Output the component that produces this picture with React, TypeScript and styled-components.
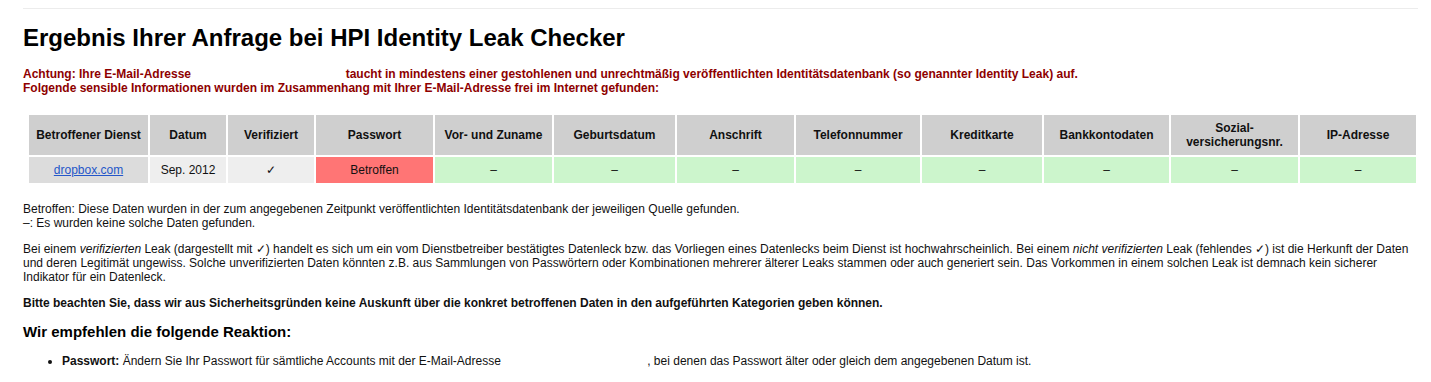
import React from "react";
import styled, { createGlobalStyle } from "styled-components";

const Global = createGlobalStyle`
  html, body { margin: 0; padding: 0; background: #fff; }
  body {
    font-family: "Liberation Sans", Arial, Helvetica, sans-serif;
    font-size: 12px;
    line-height: 14px;
    color: #111;
  }
`;

const Page = styled.div`
  width: 1395px;
  padding: 8px 0 0 23px;
`;

const Rule = styled.hr`
  margin: 0;
  border: 0;
  border-top: 1px solid #ececec;
`;

const Title = styled.h1`
  margin: 15px 0 0;
  font-size: 24px;
  line-height: 28px;
  font-weight: bold;
  color: #000;
`;

const Warning = styled.p`
  margin: 15px 0 0;
  font-weight: bold;
  color: #8e0000;
`;

const Redacted = styled.span<{ $w: number }>`
  display: inline-block;
  width: ${(p) => p.$w}px;
`;

const Table = styled.table`
  margin: 18px 0 0 4px;
  width: 1391px;
  table-layout: fixed;
  border-collapse: separate;
  border-spacing: 2px;
`;

const Col = styled.col<{ $w: number }>`
  width: ${(p) => p.$w}px;
`;

const Th = styled.th`
  background: #cfcfcf;
  padding: 6px;
  font-weight: bold;
  text-align: center;
  vertical-align: middle;
  color: #111;
`;

type Tone = "service" | "meta" | "bad" | "good";
const tones: Record<Tone, string> = {
  service: "#dcdcdc",
  meta: "#eeeeee",
  bad: "#ff7575",
  good: "#ccf5cc",
};

const Td = styled.td<{ $tone: Tone }>`
  background: ${(p) => tones[p.$tone]};
  padding: 6px;
  text-align: center;
  vertical-align: middle;
  color: #111;
`;

const ServiceLink = styled.a`
  color: #2457c9;
  text-decoration: underline;
`;

const Text = styled.p<{ $top: number }>`
  margin: ${(p) => p.$top}px 0 0;
`;

const Strong = styled.p`
  margin: 12px 0 0;
  font-weight: bold;
`;

const Sub = styled.h3`
  margin: 13px 0 0;
  font-size: 15px;
  line-height: 18px;
  font-weight: bold;
  color: #000;
`;

const List = styled.ul`
  margin: 13px 0 0;
  padding-left: 39px;
`;

const columns: { label: string; w: number }[] = [
  { label: "Betroffener Dienst", w: 119 },
  { label: "Datum", w: 76 },
  { label: "Verifiziert", w: 86 },
  { label: "Passwort", w: 117 },
  { label: "Vor- und Zuname", w: 117 },
  { label: "Geburtsdatum", w: 121 },
  { label: "Anschrift", w: 117 },
  { label: "Telefonnummer", w: 124 },
  { label: "Kreditkarte", w: 120 },
  { label: "Bankkontodaten", w: 125 },
  { label: "Sozial-versicherungsnr.", w: 127 },
  { label: "IP-Adresse", w: 116 },
];

export default function App() {
  return (
    <>
      <Global />
      <Page>
        <Rule />
        <Title>Ergebnis Ihrer Anfrage bei HPI Identity Leak Checker</Title>
        <Warning>
          Achtung: Ihre E-Mail-Adresse <Redacted $w={148} /> taucht in mindestens einer gestohlenen und
          unrechtmäßig veröffentlichten Identitätsdatenbank (so genannter Identity Leak) auf.
          <br />
          Folgende sensible Informationen wurden im Zusammenhang mit Ihrer E-Mail-Adresse frei im Internet
          gefunden:
        </Warning>
        <Table>
          <colgroup>
            {columns.map((c) => (
              <Col key={c.label} $w={c.w} />
            ))}
          </colgroup>
          <thead>
            <tr>
              {columns.map((c) => (
                <Th key={c.label}>{c.label}</Th>
              ))}
            </tr>
          </thead>
          <tbody>
            <tr>
              <Td $tone="service">
                <ServiceLink href="#">dropbox.com</ServiceLink>
              </Td>
              <Td $tone="meta">Sep. 2012</Td>
              <Td $tone="meta">✓</Td>
              <Td $tone="bad">Betroffen</Td>
              {Array.from({ length: 8 }).map((_, i) => (
                <Td key={i} $tone="good">
                  –
                </Td>
              ))}
            </tr>
          </tbody>
        </Table>
        <Text $top={17}>
          Betroffen: Diese Daten wurden in der zum angegebenen Zeitpunkt veröffentlichten Identitätsdatenbank
          der jeweiligen Quelle gefunden.
          <br />
          –: Es wurden keine solche Daten gefunden.
        </Text>
        <Text $top={12}>
          Bei einem <em>verifizierten</em> Leak (dargestellt mit ✓) handelt es sich um ein vom Dienstbetreiber
          bestätigtes Datenleck bzw. das Vorliegen eines Datenlecks beim Dienst ist hochwahrscheinlich. Bei
          einem <em>nicht verifizierten</em> Leak (fehlendes ✓) ist die Herkunft der Daten und deren Legitimät
          ungewiss. Solche unverifizierten Daten könnten z.B. aus Sammlungen von Passwörtern oder Kombinationen
          mehrerer älterer Leaks stammen oder auch generiert sein. Das Vorkommen in einem solchen Leak ist
          demnach kein sicherer Indikator für ein Datenleck.
        </Text>
        <Strong>
          Bitte beachten Sie, dass wir aus Sicherheitsgründen keine Auskunft über die konkret betroffenen Daten
          in den aufgeführten Kategorien geben können.
        </Strong>
        <Sub>Wir empfehlen die folgende Reaktion:</Sub>
        <List>
          <li>
            <b>Passwort:</b> Ändern Sie Ihr Passwort für sämtliche Accounts mit der E-Mail-Adresse{" "}
            <Redacted $w={143} />, bei denen das Passwort älter oder gleich dem angegebenen Datum ist.
          </li>
        </List>
      </Page>
    </>
  );
}
